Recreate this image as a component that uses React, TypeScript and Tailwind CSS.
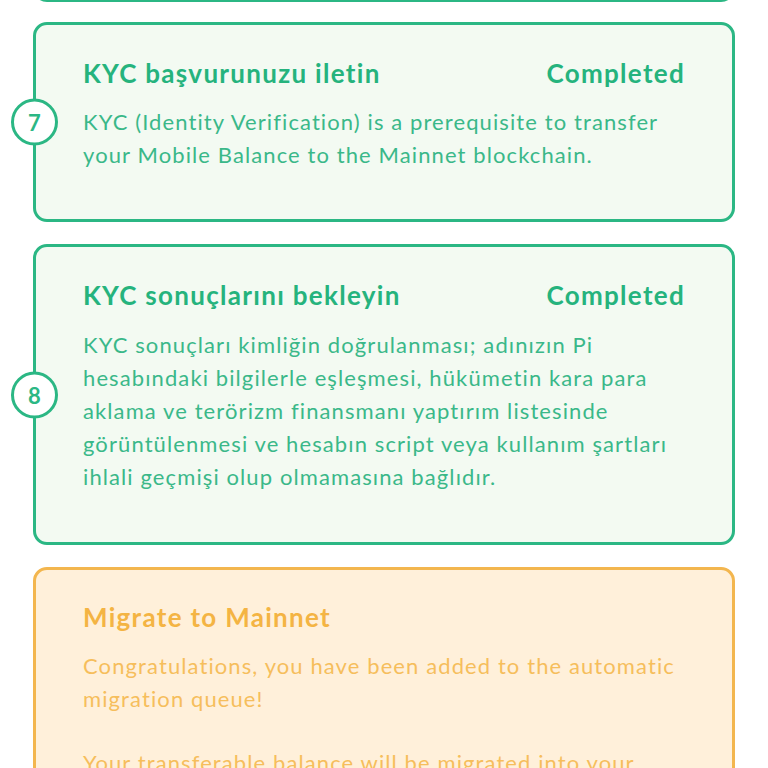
import React from 'react';

type Step = {
  num?: number;
  title: string;
  status?: string;
  lines: string[];
  box: string;
  body: string;
};

const steps: Step[] = [
  {
    num: 7,
    title: 'KYC başvurunuzu iletin',
    status: 'Completed',
    lines: [
      'KYC (Identity Verification) is a prerequisite to transfer',
      'your Mobile Balance to the Mainnet blockchain.',
    ],
    box: 'mt-[20px] pt-[32px] pb-[48px]',
    body: 'mt-[16px]',
  },
  {
    num: 8,
    title: 'KYC sonuçlarını bekleyin',
    status: 'Completed',
    lines: [
      'KYC sonuçları kimliğin doğrulanması; adınızın Pi',
      'hesabındaki bilgilerle eşleşmesi, hükümetin kara para',
      'aklama ve terörizm finansmanı yaptırım listesinde',
      'görüntülenmesi ve hesabın script veya kullanım şartları',
      'ihlali geçmişi olup olmamasına bağlıdır.',
    ],
    box: 'mt-[22px] pt-[32px] pb-[49px]',
    body: 'mt-[17px]',
  },
];

const StepCard: React.FC<{ step: Step }> = ({ step }) => (
  <div className={`relative rounded-[14px] border-[3px] border-[#2bb784] bg-[#f3faf2] px-[47px] ${step.box}`}>
    {step.num !== undefined && (
      <div className="absolute left-[-25px] top-1/2 flex h-[47px] w-[47px] -translate-y-1/2 items-center justify-center rounded-full border-[3px] border-[#2bb784] bg-white text-[22px] font-bold text-[#2bb784]">
        {step.num}
      </div>
    )}
    <div className="flex items-center justify-between text-[26px] font-bold leading-[32px] tracking-[1.3px] text-[#25b37d]">
      <span>{step.title}</span>
      {step.status && <span>{step.status}</span>}
    </div>
    <p className={`${step.body} text-[22px] leading-[33px] tracking-[1.1px] text-[#3ab889]`}>
      {step.lines.map((l, i) => (
        <span key={i} className="block whitespace-nowrap">
          {l}
        </span>
      ))}
    </p>
  </div>
);

export default function App() {
  return (
    <div className="min-h-screen overflow-hidden bg-white px-[33px]" style={{ fontFamily: 'Lato, "Noto Sans", sans-serif' }}>
      <div className="flex flex-col">
        <div className="-mt-[100px] h-[102px] rounded-[14px] border-[3px] border-[#2bb784] bg-[#f3faf2]" />
        {steps.map((s) => (
          <StepCard key={s.title} step={s} />
        ))}
        <div className="mt-[22px] rounded-[14px] border-[3px] border-[#f3b64e] bg-[#fff0da] px-[47px] pt-[31px] pb-[46px]">
          <div className="text-[26px] font-bold leading-[32px] tracking-[1.3px] text-[#f4b443]">Migrate to Mainnet</div>
          <div className="mt-[16px] text-[22px] leading-[33px] tracking-[1.1px] text-[#f6be5c]">
            <span className="block whitespace-nowrap">Congratulations, you have been added to the automatic</span>
            <span className="block">migration queue!</span>
            <span className="block h-[31px]" />
            <span className="block whitespace-nowrap">Your transferable balance will be migrated into your</span>
            <span className="block">Mainnet wallet.</span>
          </div>
        </div>
      </div>
    </div>
  );
}
